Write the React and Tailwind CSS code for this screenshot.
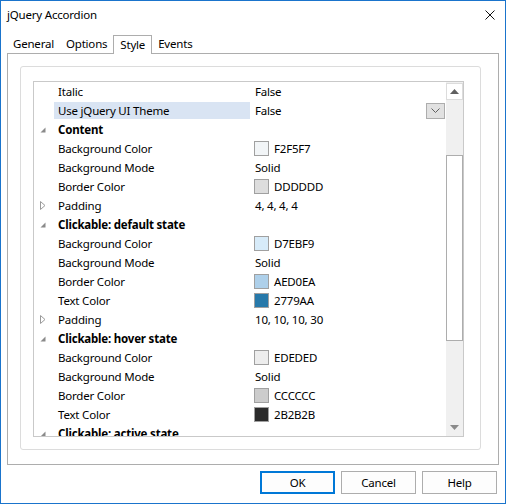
import React from "react";

const rows = [
  { t: "prop", label: "Italic", value: "False" },
  { t: "prop", label: "Use jQuery UI Theme", value: "False", selected: true },
  { t: "cat", label: "Content" },
  { t: "prop", label: "Background Color", color: "#F2F5F7", value: "F2F5F7" },
  { t: "prop", label: "Background Mode", value: "Solid" },
  { t: "prop", label: "Border Color", color: "#DDDDDD", value: "DDDDDD" },
  { t: "sub", label: "Padding", value: "4, 4, 4, 4" },
  { t: "cat", label: "Clickable: default state" },
  { t: "prop", label: "Background Color", color: "#D7EBF9", value: "D7EBF9" },
  { t: "prop", label: "Background Mode", value: "Solid" },
  { t: "prop", label: "Border Color", color: "#AED0EA", value: "AED0EA" },
  { t: "prop", label: "Text Color", color: "#2779AA", value: "2779AA" },
  { t: "sub", label: "Padding", value: "10, 10, 10, 30" },
  { t: "cat", label: "Clickable: hover state" },
  { t: "prop", label: "Background Color", color: "#EDEDED", value: "EDEDED" },
  { t: "prop", label: "Background Mode", value: "Solid" },
  { t: "prop", label: "Border Color", color: "#CCCCCC", value: "CCCCCC" },
  { t: "prop", label: "Text Color", color: "#2B2B2B", value: "2B2B2B" },
  { t: "cat", label: "Clickable: active state" },
];

function Glyph({ t }) {
  if (t === "cat")
    return (
      <svg width="6" height="6" viewBox="0 0 6 6" className="block">
        <path d="M5.5 0.5 L5.5 5.5 L0.5 5.5 Z" fill="#8a8a8a" />
      </svg>
    );
  if (t === "sub")
    return (
      <svg width="6" height="9" viewBox="0 0 6 9" className="block">
        <path d="M0.5 0.5 L5 4.5 L0.5 8.5 Z" fill="none" stroke="#9a9a9a" strokeWidth="1" />
      </svg>
    );
  return null;
}

function Row({ r }) {
  return (
    <div className="flex h-[19px] items-center">
      <div className="w-[20px] h-full flex items-center justify-end pr-[8px]">
        <Glyph t={r.t} />
      </div>
      <div
        className={
          "w-[196px] h-[17px] flex items-center pl-[4px] whitespace-nowrap " +
          (r.selected ? "bg-[#d9e4f3]" : "") +
          (r.t === "cat" ? " font-bold" : "")
        }
      >
        {r.label}
      </div>
      <div className="flex-1 h-full flex items-center pl-[4px] whitespace-nowrap">
        {r.color && (
          <div
            className="w-[15px] h-[15px] border border-[#a0a0a0] mr-[5px]"
            style={{ backgroundColor: r.color }}
          />
        )}
        {r.value && <span className={r.color ? "" : "pl-[1px]"}>{r.value}</span>}
        {r.selected && (
          <div className="ml-auto mr-[1px] w-[19px] h-[16px] border border-[#adadad] bg-[#e1e1e1] flex items-center justify-center">
            <svg width="9" height="5" viewBox="0 0 9 5">
              <path d="M0.5 0.5 L4.5 4.5 L8.5 0.5" fill="none" stroke="#606060" strokeWidth="1" />
            </svg>
          </div>
        )}
      </div>
    </div>
  );
}

function Scrollbar() {
  return (
    <div className="w-[17px] h-full bg-[#f0f0f0] flex flex-col">
      <div className="w-[17px] h-[17px] bg-white border border-[#dcdcdc] flex items-center justify-center mt-[1px] mx-0">
        <svg width="9" height="5" viewBox="0 0 9 5">
          <path d="M0 5 L4.5 0 L9 5 Z" fill="#606060" />
        </svg>
      </div>
      <div className="h-[55px]" />
      <div className="w-[17px] h-[186px] bg-white border border-[#adadad]" />
      <div className="flex-1" />
      <div className="w-[17px] h-[17px] bg-[#f0f0f0] flex items-center justify-center">
        <svg width="9" height="5" viewBox="0 0 9 5">
          <path d="M0 0 L9 0 L4.5 5 Z" fill="#8a8a8a" />
        </svg>
      </div>
    </div>
  );
}

export default function App() {
  return (
    <div
      className="w-[506px] h-[504px] border border-[#1a74cc] bg-white flex flex-col text-[11.5px] tracking-[-0.2px] text-black"
      style={{ fontFamily: '"Segoe UI", "Noto Sans", sans-serif' }}
    >
      {/* Title bar */}
      <div className="h-[27px] flex items-center pl-[6px] pr-[10px]">
        <span>jQuery Accordion</span>
        <svg className="ml-auto" width="10" height="10" viewBox="0 0 10 10">
          <path d="M0.5 0.5 L9.5 9.5 M9.5 0.5 L0.5 9.5" stroke="#111" strokeWidth="1" />
        </svg>
      </div>

      {/* Tabs */}
      <div className="mt-[7px] h-[18px] flex items-end pl-[6px] relative z-10">
        <div className="h-[18px] flex items-center pl-[6px] pr-[6px]">General</div>
        <div className="h-[18px] flex items-center pl-[6px] pr-[6px]">Options</div>
        <div className="h-[19px] flex items-center px-[6px] border border-b-0 border-[#adadad] bg-white mb-[-1px]">Style</div>
        <div className="h-[18px] flex items-center pl-[6px] pr-[6px]">Events</div>
      </div>

      {/* Panel */}
      <div className="ml-[6px] w-[492px] h-[412px] border border-[#adadad] pt-[12px] pl-[12px]">
        <div className="w-[461px] h-[384px] border border-[#dcdcdc] rounded-[3px] pt-[14px] pl-[12px]">
          <div className="w-[431px] h-[356px] border border-[#c9c9c9] flex overflow-hidden">
            <div className="flex-1 h-full overflow-hidden">
              {rows.map((r, i) => (
                <Row key={i} r={r} />
              ))}
            </div>
            <Scrollbar />
          </div>
        </div>
      </div>

      {/* Buttons */}
      <div className="mt-[6px] flex pl-[259px] gap-[6px]">
        <button className="w-[75px] h-[23px] border-2 border-[#0078d7] bg-[#fdfdfd] flex items-center justify-center">OK</button>
        <button className="w-[75px] h-[23px] border border-[#adadad] bg-[#fdfdfd] flex items-center justify-center">Cancel</button>
        <button className="w-[75px] h-[23px] border border-[#adadad] bg-[#fdfdfd] flex items-center justify-center">Help</button>
      </div>
    </div>
  );
}
